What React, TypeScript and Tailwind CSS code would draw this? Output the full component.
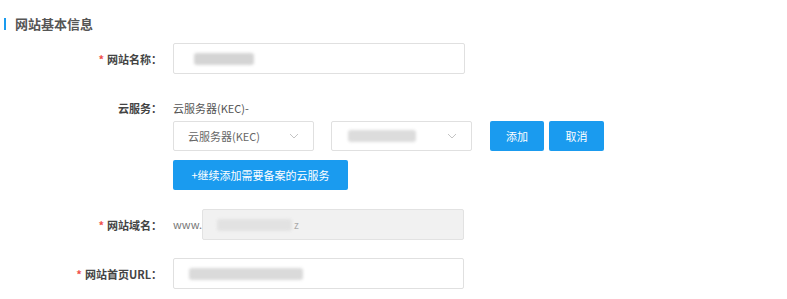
import React from "react";

function Blur({ w, tone = "bg-[#d4d4d4]" }: { w: number; tone?: string }) {
  return (
    <div
      className={`h-[12px] ${tone} rounded-[3px] blur-[1.5px]`}
      style={{ width: w }}
    />
  );
}

function Label({ text, required }: { text: string; required?: boolean }) {
  return (
    <div className="w-[162px] shrink-0 text-right text-[11px] font-bold text-[#444] leading-[14px]">
      {required && <span className="text-[#f0504a] mr-[3px]">*</span>}
      {text}
    </div>
  );
}

function Chevron() {
  return (
    <svg width="10" height="6" viewBox="0 0 10 6" fill="none" className="shrink-0">
      <path d="M1 1l4 4 4-4" stroke="#c4c4c4" strokeWidth="1" />
    </svg>
  );
}

export default function App() {
  return (
    <div className="w-[787px] h-[299px] bg-white overflow-hidden pt-[17px] font-['Noto_Sans_CJK_SC','Noto_Sans',sans-serif]">
      {/* section title */}
      <div className="flex items-center h-[14px] pl-[4px]">
        <div className="w-[2px] h-[12px] bg-[#1a9bef]" />
        <span className="ml-[9px] text-[13px] font-bold text-[#555] leading-[14px]">网站基本信息</span>
      </div>

      {/* 网站名称 */}
      <div className="flex items-center gap-[11px] mt-[12px]">
        <Label text="网站名称：" required />
        <div className="w-[292px] h-[31px] border border-[#e0e0e0] rounded-[2px] flex items-center pl-[20px]">
          <Blur w={60} />
        </div>
      </div>

      {/* 云服务 */}
      <div className="flex items-start gap-[11px] mt-[27px]">
        <Label text="云服务：" />
        <div className="flex flex-col">
          <div className="text-[11px] text-[#555] leading-[14px]">云服务器(KEC)-</div>
          <div className="flex items-center mt-[6px]">
            <div className="w-[141px] h-[30px] border border-[#e0e0e0] rounded-[2px] flex items-center justify-between pl-[14px] pr-[14px]">
              <span className="text-[11px] text-[#666]">云服务器(KEC)</span>
              <Chevron />
            </div>
            <div className="w-[141px] h-[30px] ml-[17px] border border-[#e0e0e0] rounded-[2px] flex items-center justify-between pl-[16px] pr-[14px]">
              <Blur w={68} tone="bg-[#dcdcdc]" />
              <Chevron />
            </div>
            <button className="ml-[18px] w-[54px] h-[30px] bg-[#1a9bef] rounded-[2px] text-white text-[11px]">添加</button>
            <button className="ml-[5px] w-[55px] h-[30px] bg-[#1a9bef] rounded-[2px] text-white text-[11px]">取消</button>
          </div>
          <button className="mt-[9px] w-[175px] h-[30px] bg-[#1a9bef] rounded-[2px] text-white text-[11px]">
            +继续添加需要备案的云服务
          </button>
        </div>
      </div>

      {/* 网站域名 */}
      <div className="flex items-center gap-[11px] mt-[19px]">
        <Label text="网站域名：" required />
        <div className="flex items-center">
          <span className="text-[11px] text-[#777] w-[29px]">www.</span>
          <div className="w-[262px] h-[31px] bg-[#f1f1f1] border border-[#e2e2e2] rounded-[2px] flex items-center pl-[14px]">
            <Blur w={75} tone="bg-[#e2e2e2]" />
            <span className="ml-[2px] text-[10px] text-[#aaa]">z</span>
          </div>
        </div>
      </div>

      {/* 网站首页URL */}
      <div className="flex items-center gap-[11px] mt-[18px]">
        <Label text="网站首页URL：" required />
        <div className="w-[291px] h-[31px] border border-[#e0e0e0] rounded-[2px] flex items-center pl-[15px]">
          <Blur w={114} tone="bg-[#dadada]" />
        </div>
      </div>
    </div>
  );
}
